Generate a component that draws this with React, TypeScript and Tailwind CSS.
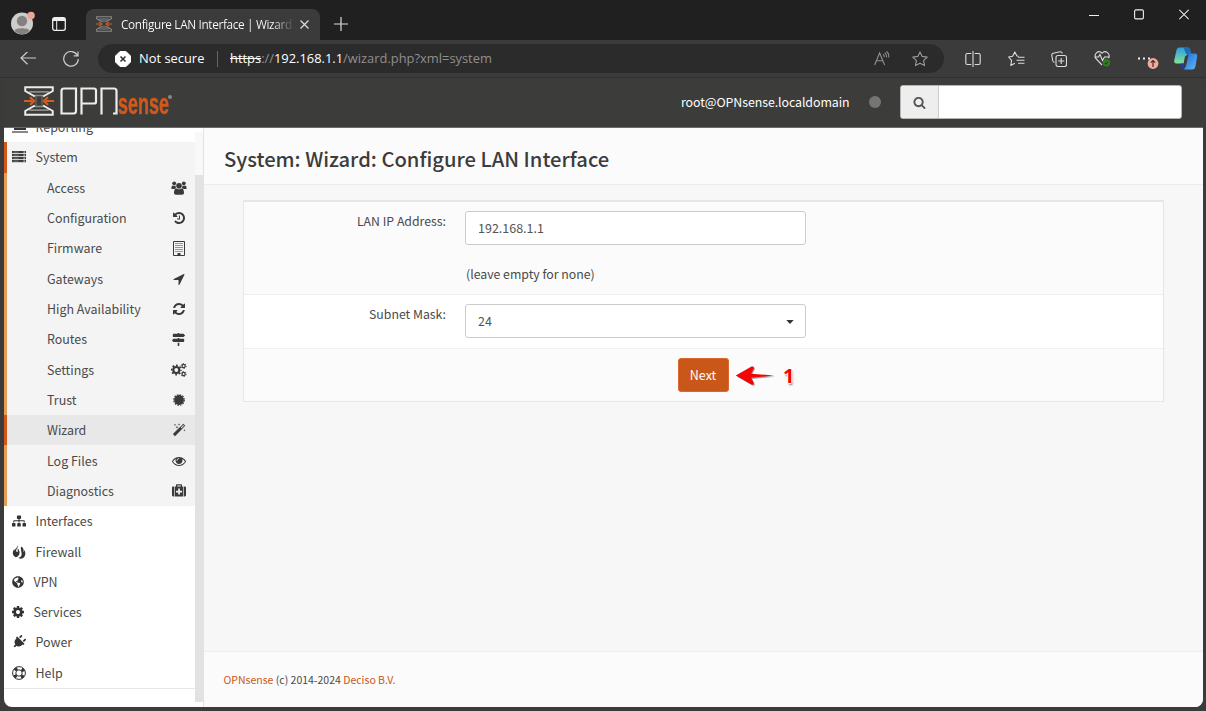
import type { ReactNode } from "react";
import { FaSitemap, FaMapSigns, FaPlug, FaGlobeAmericas } from "react-icons/fa";

const PATHS = {
  search:
    "M1216 832q0-185-131.5-316.5t-316.5-131.5-316.5 131.5-131.5 316.5 131.5 316.5 316.5 131.5 316.5-131.5 131.5-316.5zm512 832q0 52-38 90t-90 38q-54 0-90-38l-343-342q-179 124-399 124-143 0-273.5-55.5t-225-150-150-225-55.5-273.5 55.5-273.5 150-225 225-150 273.5-55.5 273.5 55.5 225 150 150 225 55.5 273.5q0 220-124 399l343 343q37 37 37 90z",
  cog: "M1152 896q0-106-75-181t-181-75-181 75-75 181 75 181 181 75 181-75 75-181zm512-109v222q0 12-8 23t-20 13l-185 28q-19 54-39 91 35 50 107 138 10 12 10 25t-9 23q-27 37-99 108t-94 71q-12 0-26-9l-138-108q-44 23-91 38-16 136-29 186-7 28-36 28h-222q-14 0-24.5-8.5t-11.5-21.5l-28-184q-49-16-90-37l-141 107q-10 9-25 9-14 0-25-11-126-114-165-168-7-10-7-23 0-12 8-23 15-21 51-66.5t54-70.5q-27-50-41-99l-183-27q-13-2-21-12.5t-8-23.5v-222q0-12 8-23t19-13l186-28q14-46 39-92-40-57-107-138-10-12-10-24 0-10 9-23 26-36 98.5-107.5t94.5-71.5q13 0 26 10l138 107q44-23 91-38 16-136 29-186 7-28 36-28h222q14 0 24.5 8.5t11.5 21.5l28 184q49 16 90 37l142-107q9-9 24-9 13 0 25 10 129 119 165 170 7 8 7 22 0 12-8 23-15 21-51 66.5t-54 70.5q26 50 41 98l183 28q13 2 21 12.5t8 23.5z",
  refresh:
    "M1639 1056q0 5-1 7-64 268-268 434.5t-478 166.5q-146 0-282.5-55t-243.5-157l-129 129q-19 19-45 19t-45-19-19-45v-448q0-26 19-45t45-19h448q26 0 45 19t19 45-19 45l-137 137q71 66 161 102t187 36q134 0 250-65t186-179q11-17 53-117 8-23 30-23h192q13 0 22.5 9.5t9.5 22.5zm25-800v448q0 26-19 45t-45 19h-448q-26 0-45-19t-19-45 19-45l138-138q-148-137-349-137-134 0-250 65t-186 179q-11 17-53 117-8 23-30 23h-199q-13 0-22.5-9.5t-9.5-22.5v-7q65-268 270-434.5t480-166.5q146 0 284 55.5t245 156.5l130-129q19-19 45-19t45 19 19 45z",
  history:
    "M1664 896q0 156-61 298t-164 245-245 164-298 61q-172 0-327-72.5t-264-204.5q-7-10-6.5-22.5t8.500-20.5l137-138q10-9 25-9 16 2 23 12 73 95 179 147t225 52q104 0 198.5-40.5t163.5-109.5 109.500-163.500 40.500-198.500-40.500-198.500-109.500-163.500-163.500-109.500-198.500-40.500q-98 0-188 35.500t-160 101.500l137 138q31 30 14 69-17 40-59 40h-448q-26 0-45-19t-19-45v-448q0-42 40-59 39-17 69 14l130 129q107-101 244.5-156.500t284.500-55.500q156 0 298 61t245 164 164 245 61 298zm-640-288v448q0 14-9 23t-23 9h-320q-14 0-23-9t-9-23v-64q0-14 9-23t23-9h224v-352q0-14 9-23t23-9h64q14 0 23 9t9 23z",
  arrow:
    "M1593 349l-640 1280q-17 35-57 35-5 0-15-2-22-5-35.5-22.5t-13.5-39.5v-576h-576q-22 0-39.5-13.5t-22.5-35.5 4-42 29-30l1280-640q13-7 29-7 27 0 45 19 15 14 18.500 34.500t-6.500 39.500z",
  eye: "M1664 960q-152-236-381-353 61 104 61 225 0 185-131.5 316.5t-316.5 131.5-316.5-131.5-131.5-316.5q0-121 61-225-229 117-381 353 133 205 333.5 326.5t434.5 121.5 434.5-121.5 333.5-326.5zm-720-384q0-20-14-34t-34-14q-125 0-214.5 89.5t-89.5 214.5q0 20 14 34t34 14 34-14 14-34q0-86 61-147t147-61q20 0 34-14t14-34zm848 384q0 34-20 69-140 230-376.5 368.5t-499.5 138.5-499.5-139-376.5-368q-20-35-20-69t20-69q140-229 376.5-368t499.5-139 499.5 139 376.5 368q20 35 20 69z",
};

function Glyph({ d, size = 14 }: { d: string; size?: number }) {
  return (
    <svg width={size} height={size} viewBox="0 0 1792 1792" fill="currentColor">
      <path d={d} />
    </svg>
  );
}

function Users() {
  return (
    <svg width="16" height="14" viewBox="0 0 16 14" fill="currentColor">
      <circle cx="3.2" cy="2.3" r="1.9" />
      <circle cx="12.8" cy="2.3" r="1.9" />
      <path d="M.4 7.400c0-2 .6-3 1.500-3 .5.5 2 .6 2.700.1-.1 1.300.2 2 .8 2.700-1 0-1.600.3-2.100.9H1.500C.8 8.100.4 7.900.4 7.400zM15.600 7.400c0-2-.6-3-1.500-3-.5.5-2 .6-2.700.1.1 1.300-.2 2-.8 2.700 1 0 1.600.3 2.100.9h1.800c.7 0 1.100-.2 1.100-.7z" />
      <circle cx="8" cy="4.700" r="2.800" />
      <path d="M3 11.700c0-2.700.9-4.200 2.400-4.200.8.900 4.400.9 5.200 0 1.500 0 2.400 1.500 2.400 4.200 0 1.300-.7 2-2 2H5c-1.300 0-2-.7-2-2z" />
    </svg>
  );
}

function Gears() {
  return (
    <svg width="16" height="14" viewBox="0 0 16 14" fill="none" stroke="currentColor">
      <circle cx="5.300" cy="7" r="3" strokeWidth="2.200" />
      <circle cx="5.300" cy="7" r="4.700" strokeWidth="1.500" strokeDasharray="1.850 1.840" strokeDashoffset=".9" />
      <circle cx="12.600" cy="3" r="1.600" strokeWidth="1.200" />
      <circle cx="12.600" cy="3" r="2.600" strokeWidth=".9" strokeDasharray="1.200 1.520" />
      <circle cx="12.600" cy="11" r="1.600" strokeWidth="1.200" />
      <circle cx="12.600" cy="11" r="2.600" strokeWidth=".9" strokeDasharray="1.200 1.520" />
    </svg>
  );
}

function Seal() {
  return (
    <svg width="12" height="12" viewBox="0 0 12 12" fill="currentColor">
      <circle cx="6" cy="6" r="4.900" />
      <circle cx="6" cy="6" r="5.300" fill="none" stroke="currentColor" strokeWidth="1.200" strokeDasharray="1.550 1.225" />
    </svg>
  );
}

function Building() {
  return (
    <svg width="12" height="15" viewBox="0 0 12 15" fill="none" stroke="currentColor">
      <path d="M.5.5h11v14H.5z" strokeWidth="1" />
      <path d="M2.500 2.500h7M2.500 4.500h7M2.500 6.500h7M2.500 8.500h7M2.500 10.500h7" strokeDasharray="1 1" strokeWidth="1" />
      <path d="M4.500 13h3" strokeWidth="2" />
    </svg>
  );
}

function Wand() {
  return (
    <svg width="14" height="14" viewBox="0 0 14 14" fill="currentColor">
      <path d="M11.300.8 13.200 2.700 3 13.200 .9 11.100zM11.200 2 8.800 4.400l.8.8L12 2.800z" fillRule="evenodd" />
      <path d="m3 .7.300.9.900.3-.9.300-.3.9-.3-.9-.9-.3.900-.3zM7 .2l.3.900.9.300-.9.300-.3.9-.3-.9-.9-.3.900-.3zM5 2.700l.4 1.100 1.100.4-1.100.4L5 5.700l-.4-1.100-1.100-.4 1.100-.4zM12.500 6l.3.900.9.300-.9.300-.3.900-.3-.9-.9-.3.900-.3z" />
    </svg>
  );
}

function Medkit() {
  return (
    <svg width="14" height="13" viewBox="0 0 14 13" fill="currentColor">
      <path d="M4 2.500V1.200C4 .5 4.400.2 5 .2h4c.6 0 1 .3 1 1v1.300h1.200v10H2.800v-10zm1.200 0h3.600v-1.100H5.200zM6.200 4.500V6.700H4v1.700h2.200v2.200h1.700V8.400h2.200V6.700H7.900V4.500z" fillRule="evenodd" />
      <path d="M0 3.900C0 3 .5 2.500 1.300 2.500h.9v10h-.9C.5 12.500 0 12 0 11.100zM14 3.900c0-.9-.5-1.400-1.300-1.400h-.9v10h.9c.8 0 1.300-.5 1.300-1.400z" />
    </svg>
  );
}

function Server() {
  return (
    <svg width="14" height="12" viewBox="0 0 14 12">
      {[0, 3, 6, 9].map((y) => (
        <g key={y}>
          <rect x="0" y={y} width="14" height="2.200" fill="#3c3c3b" />
          <path d={`M1.500 ${y + 1.1}h5`} stroke="#a5a5a5" strokeWidth=".6" />
          <rect x="11.500" y={y + 0.5} width="1.300" height="1.200" fill="#eee" />
        </g>
      ))}
    </svg>
  );
}

function Flames() {
  return (
    <svg width="14" height="14" viewBox="0 0 14 14" fill="currentColor">
      <path d="M6 0C6.700 2.300 4.200 3.400 4.200 5.700c0 1.200.9 1.700 1.400 1.100.6-.8-.2-2.200 0-3.500 1.900 1.900 2.600 4.300 1.500 6.500-.8 1.600-2 2.300-3.400 2.400C1.600 11.400.6 9.500.8 7.600.9 6 1.800 5 2.200 3.800c.3 1 .2 1.800.3 2.600C2.600 3.800 5.500 2.800 6 0z" />
      <path d="M9 1.500c2.500 1.300 3.200 3.400 2.300 5.600.7-.4 1-1.100 1-2 1.200 2 1.500 4.500.2 6.400-1 1.600-2.600 2.300-4.200 2.200-.9-.1-1.600-.4-2.100-.9 1.300-.1 2.600-.9 3.200-2.300C10.500 7.700 8.200 5.500 9 1.500z" />
    </svg>
  );
}

function LifeRing() {
  return (
    <svg width="14" height="14" viewBox="0 0 14 14" fill="none" stroke="currentColor">
      <circle cx="7" cy="7" r="6.400" strokeWidth="1" />
      <circle cx="7" cy="7" r="3.200" strokeWidth="1" />
      <circle cx="7" cy="7" r="4.800" strokeWidth="3" strokeDasharray="3 4.540" strokeDashoffset="-2.270" />
    </svg>
  );
}

function Gate({ width, height, line = "#ececec" }: { width: number; height: number; line?: string }) {
  return (
    <svg width={width} height={height} viewBox="0 0 29 30" fill="none" preserveAspectRatio="none">
      <path d="M5 5.800h19M9 9.500h11M9 20.500h11M5 24.200h19" stroke="#8b8b8a" strokeWidth="1.700" />
      <path d="M11.600 10v10M17.400 10v10" stroke="#6f6f6e" strokeWidth="1" />
      <path d="M10.500 10.500 1.200 5V1.200h26.600V5l-9.300 5.500M10.500 19.500 1.200 25v3.800h26.600V25l-9.300-5.500" stroke={line} strokeWidth="1.900" />
      <path d="M0 15h8M29 15h-8" stroke="#d35e1d" strokeWidth="2.200" />
      <path d="m5.800 11.300 4 3.700-4 3.700M23.200 11.300l-4 3.700 4 3.700" stroke="#d35e1d" strokeWidth="2.200" />
    </svg>
  );
}

function Brand() {
  return (
    <div className="flex items-start">
      <Gate width={30} height={30} />
      <svg className="ml-[6px] mt-[1px]" width="59" height="28" viewBox="0 0 59 28" fill="none" stroke="#ececec" strokeWidth="2.200">
        <path d="M1.500 4q0-2.500 2.500-2.500H16V24q0 2.500-2.500 2.500h-12zM21.500 27.500v-26H34q2 0 2 2V15q0 1.500-2 1.500H21.500M41.500 27.500v-26H54q2.500 0 2.500 2.500v22.500h-3.500" />
      </svg>
      <span className="-ml-px mt-[3px] block h-[30px] w-[51px] origin-left scale-x-[0.610] whitespace-nowrap font-['Liberation_Sans',sans-serif] text-[29.500px] font-bold leading-[30px] text-[#d0591d] [-webkit-text-stroke:0.500px_#d0591d]">
        sense
      </span>
      <span className="-ml-px mt-[9px] h-[4px] w-[4px] rounded-full bg-[#888]" />
    </div>
  );
}

function SubItem({ label, icon, active = false }: { label: string; icon: ReactNode; active?: boolean }) {
  return (
    <div
      className={
        active
          ? "flex h-[30.320px] items-center border-l-[3px] border-[#d35818] bg-[#e8e8e8] pl-[40px] pr-[8px]"
          : "flex h-[30.320px] items-center border-l-[3px] border-[#e59d56] bg-[#f4f4f4] pl-[40px] pr-[8px]"
      }
    >
      <span className="grow">{label}</span>
      <span className="flex w-[17px] justify-center text-[#3a3a3a]">{icon}</span>
    </div>
  );
}

function TopItem({ label, icon, narrow = false }: { label: string; icon: ReactNode; narrow?: boolean }) {
  return (
    <div className="flex h-[30.320px] items-center pl-[8px]">
      <span className={narrow ? "-ml-px flex w-[22.500px] text-[#333]" : "flex w-[23.500px] text-[#333]"}>{icon}</span>
      {label}
    </div>
  );
}

function Sidebar() {
  return (
    <aside className="flex w-[200px] shrink-0 border-r border-[#e3e3e3] bg-white text-[12.450px] leading-[18px] text-[#4a4a4a]">
      <div className="w-[191px] overflow-hidden">
        <div className="-mt-[16px]">
          <TopItem
            label="Reporting"
            icon={
              <svg width="16" height="14" viewBox="0 0 16 14">
                <path d="M2 1h12v9H2z" fill="#3b3036" />
                <path d="M0 11h16v2H0z" fill="#888" />
              </svg>
            }
          />
          <div className="flex h-[30.320px] items-center border-l-[3px] border-[#d35818] bg-[#f4f4f4] pl-[5px]">
            <span className="flex w-[23.500px]">
              <Server />
            </span>
            System
          </div>
          <SubItem label="Access" icon={<Users />} />
          <SubItem label="Configuration" icon={<Glyph d={PATHS.history} />} />
          <SubItem label="Firmware" icon={<Building />} />
          <SubItem label="Gateways" icon={<Glyph d={PATHS.arrow} />} />
          <SubItem label="High Availability" icon={<Glyph d={PATHS.refresh} />} />
          <SubItem label="Routes" icon={<FaMapSigns size={13} />} />
          <SubItem label="Settings" icon={<Gears />} />
          <SubItem label="Trust" icon={<Seal />} />
          <SubItem label="Wizard" active icon={<Wand />} />
          <SubItem label="Log Files" icon={<Glyph d={PATHS.eye} />} />
          <SubItem label="Diagnostics" icon={<Medkit />} />
          <TopItem label="Interfaces" icon={<FaSitemap size={14} />} />
          <TopItem label="Firewall" icon={<Flames />} />
          <TopItem label="VPN" narrow icon={<FaGlobeAmericas size={12} className="ml-px" />} />
          <TopItem label="Services" narrow icon={<Glyph d={PATHS.cog} />} />
          <TopItem label="Power" icon={<FaPlug size={14} className="rotate-45" />} />
          <TopItem label="Help" icon={<LifeRing />} />
          <div className="h-px bg-[#e7e7e7]" />
        </div>
      </div>
      <div className="w-[8px] pt-[4px]">
        <div className="h-[43px] bg-[#f8f8f8]" />
        <div className="h-[527px] bg-[#e2e2e2]" />
      </div>
    </aside>
  );
}

function TitleBar() {
  return (
    <div className="flex h-[40px] shrink-0 items-end bg-[#202020] text-[#e8e8e8]">
      <div className="flex h-[34px] w-[86px] items-center pl-[11px]">
        <svg width="24" height="24" viewBox="0 0 24 24">
          <circle cx="11" cy="12.500" r="11" fill="#cfcdcb" />
          <circle cx="11" cy="10" r="5.200" fill="#848280" />
          <path d="M3.500 19.500c1-3 14-3 15 0-3.500 5-11.500 5-15 0z" fill="#848280" />
          <circle cx="20" cy="4.500" r="3.800" fill="#eea59b" />
        </svg>
        <svg className="ml-[17px] mt-[2px]" width="14" height="14" viewBox="0 0 14 14" fill="none" stroke="#eee">
          <rect x=".7" y=".7" width="12.600" height="12.600" rx="2" strokeWidth="1.300" />
          <path d="M1 2.500h12" strokeWidth="3" />
          <path d="M4.700 4v9" />
        </svg>
      </div>
      <div className="flex h-[31px] w-[234px] items-center rounded-t-[8px] bg-[#3b3b3b] pb-[2px] pl-[10px]">
        <Gate width={16} height={16} line="#8b8b8b" />
        <span className="ml-[9px] w-[172px] whitespace-nowrap bg-gradient-to-r from-[#fff] from-88% to-[#4a4a4a] bg-clip-text font-['Open_Sans',sans-serif] text-[11.800px] leading-[18px] tracking-[-0.350px] text-transparent">
          Configure LAN Interface | Wizard
        </span>
        <svg className="ml-[7px] mt-[2px]" width="9" height="9" viewBox="0 0 9 9" stroke="#ddd" strokeWidth="1.200">
          <path d="m.5.5 8 8m0-8-8 8" />
        </svg>
      </div>
      <svg className="mb-[9px] ml-[14px]" width="14" height="14" viewBox="0 0 14 14" stroke="#ddd" strokeWidth="1.200">
        <path d="M7 0v14M0 7h14" />
      </svg>
      <div className="ml-auto mr-[17px] flex items-center gap-[35px] pb-[20px]">
        <svg width="10" height="11" viewBox="0 0 10 11" stroke="#eee">
          <path d="M0 6.500h10" />
        </svg>
        <svg width="10" height="11" viewBox="0 0 10 11" fill="none" stroke="#eee" strokeWidth="1.100">
          <rect x=".6" y=".9" width="8.800" height="9" rx="1.300" />
        </svg>
        <svg width="10" height="11" viewBox="0 0 10 11" stroke="#eee" strokeWidth="1.100">
          <path d="m.3.8 9.400 9.400m0-9.400L.3 10.200" />
        </svg>
      </div>
    </div>
  );
}

const STAR = "m8 .9 2.200 4.500 5 .7-3.600 3.500.9 5L8 12.200l-4.500 2.400.9-5L.8 6.100l5-.7z";

function Toolbar() {
  return (
    <div className="flex h-[38px] shrink-0 items-center border-b border-[#303030] bg-[#3b3b3b] pl-[20px] pr-[8px] font-['Open_Sans',sans-serif]">
      <svg width="16" height="14" viewBox="0 0 16 14" fill="none" stroke="#ccc" strokeWidth="1.200">
        <path d="M16 6H1M7.500-.3 1 6l6.500 6.300" />
      </svg>
      <svg className="ml-[27px]" width="16" height="16" viewBox="0 0 16 16" fill="none" stroke="#ccc" strokeWidth="1.200">
        <path d="M14.500 4.500A7.300 7.300 0 1 0 15.300 8M15 .5v4.300h-4.300" />
      </svg>
      <div className="ml-[19px] flex h-[29px] w-[846px] items-center rounded-full bg-[#2b2b2b] pl-[17px] pr-[16px]">
        <svg width="16" height="16" viewBox="0 0 16 16">
          <path d="M5 .5h6L15.500 5v6L11 15.500H5L.5 11V5z" fill="#fff" stroke="#fff" strokeLinejoin="round" />
          <path d="m5.500 5.500 5 5m0-5-5 5" stroke="#2b2b2b" strokeWidth="1.500" />
        </svg>
        <span className="ml-[8px] mt-px w-[66px] whitespace-nowrap text-[12.900px] text-white">Not secure</span>
        <span className="ml-[12px] h-[16px] w-px bg-[#666]" />
        <span className="ml-[12px] mt-px whitespace-nowrap text-[12.900px] text-[#8f8f8f]">
          <span className="text-white line-through">https</span>://<span className="text-white">192.168.1.1</span>/wizard.php?xml=system
        </span>
        <svg className="ml-auto" width="16" height="15" viewBox="0 0 16 15" fill="none" stroke="#8f8f8f" strokeWidth="1.100">
          <path d="m.6 14 5-12 5 12M2.500 9.800h6.200M9 3.200q1.500 1 1.300 3M10.800 1.800q2.200 1.600 1.800 4.500M12.500.5q2.800 2 2.200 6" />
        </svg>
        <svg className="ml-[22px]" width="16" height="16" viewBox="0 0 16 16" fill="none" stroke="#999" strokeWidth="1.100">
          <path d={STAR} strokeLinejoin="round" />
        </svg>
      </div>
      <div className="ml-auto flex items-center text-[#ddd]">
        <svg width="16" height="16" viewBox="0 0 16 16" fill="none" stroke="currentColor" strokeWidth="1.100">
          <path d="M6.300 2.500h-4q-1.500 0-1.500 1.500v8q0 1.500 1.500 1.500h4M9.700 2.500h4q1.500 0 1.500 1.500v8q0 1.500-1.500 1.500h-4M8 0v16" />
        </svg>
        <svg className="ml-[27px]" width="17" height="16" viewBox="0 0 17 16" fill="none" stroke="currentColor" strokeWidth="1.100">
          <path d="M10.500 5.300 9 5 6.800.9 4.600 5.300l-4 .7 3 3.300-.8 5.200 4-2.200M10 6.200h6.500M8.500 9.200h8M10 12.200h6.500" strokeLinejoin="round" />
        </svg>
        <svg className="ml-[26px]" width="16" height="16" viewBox="0 0 16 16" fill="none" stroke="currentColor" strokeWidth="1.100">
          <rect x="5" y="4.500" width="10.500" height="11" rx="2" />
          <path d="M10.200 7v6M7.200 10h6M3.500 11.500Q2 11 1.700 9.500L.8 4.500Q.5 2.800 2.200 2.300L9 .8q1.800-.3 2.300 1.700" />
        </svg>
        <svg className="ml-[27px]" width="17" height="17" viewBox="0 0 17 17" fill="none" stroke="currentColor" strokeWidth="1.100">
          <path d="M8 15 1.800 8.500C-.6 4 4.500-.7 8 3.200c3.500-3.900 8.800.8 6.600 5M.5 7h4L6 4.500l2.500 6L10.500 7h5" />
          <circle cx="12.500" cy="12.800" r="3.700" fill="#2f7d20" stroke="none" />
          <path d="m11 13 1 1 2-2.300" stroke="#174d10" />
        </svg>
        <svg className="ml-[26px] mt-[2px]" width="22" height="18" viewBox="0 0 22 18">
          <path d="M1 6.500h2v2H1zM6 6.500h2v2H6zM11 6.500h2v2h-2z" fill="#eee" />
          <circle cx="16" cy="12.500" r="5.400" fill="#f0aaa2" />
          <path d="M16 16V9.500m-2.200 2.200L16 9.500l2.200 2.200" fill="none" stroke="#4b2b29" strokeWidth="1.200" />
        </svg>
        <svg className="ml-[14px]" width="25" height="23" viewBox="0 0 25 23">
          <defs>
            <linearGradient id="cpl" x1="0" y1="0" x2="0" y2="1">
              <stop offset="0" stopColor="#2e9be0" />
              <stop offset="1" stopColor="#83e29a" />
            </linearGradient>
            <linearGradient id="cpr" x1="0" y1="0" x2="1" y2="1">
              <stop offset="0" stopColor="#2a63d8" />
              <stop offset="1" stopColor="#59bdf5" />
            </linearGradient>
          </defs>
          <path d="M6 .5h8.500q2 0 2.500 2l1.500 5h-4l-2.500 2-1.500 7H3.500Q.8 16.500 1.200 13.500L3.500 3Q4.200.5 6 .5z" fill="url(#cpl)" />
          <path d="M10.500.5h4q2 0 2.500 2l1.500 5h-4q-1.600 0-2-2z" fill="#1d6cb5" />
          <path d="M17 6.500h5q2.500 0 2.200 3L22.500 19q-.6 3.500-3.500 3.500h-7q-1 0-1.500-.5 2-1 2.500-3l2.200-10q.5-2.500 1.800-2.500z" fill="url(#cpr)" />
          <path d="M7.500 16.500h3l1 5.500q-2 0-3-2z" fill="#1a3fb5" />
        </svg>
      </div>
    </div>
  );
}

function Header() {
  return (
    <header className="flex h-[50px] shrink-0 items-center border-b border-[#6b6b6a] bg-[#3c3c3b] pb-px pl-[20px] pr-[21px]">
      <Brand />
      <span className="ml-auto w-[169px] whitespace-nowrap text-[12.400px] leading-[18px] tracking-[-0.080px] text-[#fff]">
        root@OPNsense.localdomain
      </span>
      <span className="ml-[19px] h-[12px] w-[12px] rounded-full bg-[#757575]" />
      <div className="ml-[19px] flex h-[34px] w-[282px] overflow-hidden rounded-[3px] border border-[#b5b5b5] bg-white">
        <span className="flex w-[38px] items-center justify-center border-r border-[#ccc] bg-[#eee] text-[#555]">
          <Glyph d={PATHS.search} size={13} />
        </span>
      </div>
    </header>
  );
}

function Wizard() {
  return (
    <main className="flex grow flex-col bg-[#f7f7f7] text-[12.300px] leading-[18px] text-[#4a4a4a]">
      <div className="flex h-[57px] items-center border-b border-[#ececec] bg-[#fbfbfb] pb-px pl-[20px] pt-[7px]">
        <h1 className="whitespace-nowrap text-[20.200px] font-medium leading-[28px] text-[#3c3c3b]">
          System: Wizard: Configure LAN Interface
        </h1>
      </div>
      <div className="ml-[39px] mr-[39px] mt-[15px] flex h-[202px] flex-col border border-t-2 border-[#e6e6e6]">
        <div className="flex h-[93px] border-b border-[#efefef] bg-[#fbfbfb]">
          <div className="w-[202px] pt-[10px] text-right">LAN IP Address:</div>
          <div className="ml-[19px] pt-[9px]">
            <div className="flex h-[34px] w-[341px] items-center rounded-[3px] border border-[#ccc] bg-white pl-[12px] text-[12.500px] text-[#555]">
              192.168.1.1
            </div>
            <div className="ml-px mt-[20px]">(leave empty for none)</div>
          </div>
        </div>
        <div className="flex h-[54px] border-b border-[#efefef] bg-white">
          <div className="w-[202px] pt-[10px] text-right">Subnet Mask:</div>
          <div className="ml-[19px] pt-[9px]">
            <div className="flex h-[34px] w-[341px] items-center justify-between rounded-[3px] border border-[#ccc] bg-white pl-[12px] pr-[11px] text-[12.500px] text-[#555]">
              24
              <svg className="mt-px" width="8" height="4" viewBox="0 0 8 4">
                <path d="M.3 0h7.400L4 4z" fill="#333" />
              </svg>
            </div>
          </div>
        </div>
        <div className="flex grow items-start bg-[#fbfbfb] pl-[433.500px] pt-[9px]">
          <button className="h-[34px] w-[51px] rounded-[3px] border border-[#d96a2c] bg-[#ca571a] text-[12.500px] text-white">Next</button>
          <svg className="ml-[6px] mt-[6px]" width="40" height="23" viewBox="0 0 40 23">
            <path d="M2 12.500 18 3.500q3 0 1.500 2.500l-2.500 5 23 1.800-23 2.200 2.500 4.500q1 2.800-2 2z" fill="#555" opacity=".55" />
            <path d="M.8 11.500 16.500 2.500q3.500-.5 2 2.500l-2.300 4.800L39 11.500l-22.800 2.300 2.300 4.400q1 3-2.200 2.300z" fill="#f20505" />
          </svg>
          <span className="ml-[8.500px] mt-[7px] font-['Open_Sans',sans-serif] text-[20px] font-bold leading-[22px] text-[#f20505] [text-shadow:1px_0_#fff,-1px_0_#fff,0_1px_#fff,0_-1px_#fff,1px_2px_2px_#777]">
            1
          </span>
        </div>
      </div>
      <footer className="mt-auto flex h-[56px] items-center border-t border-[#efefef] bg-[#fbfbfb] pl-[19.500px] text-[10.500px]">
        <p className="whitespace-nowrap">
          <span className="text-[#ca571a]">OPNsense</span> (c) 2014-2024 <span className="text-[#ca571a]">Deciso B.V.</span>
        </p>
      </footer>
    </main>
  );
}

export default function App() {
  return (
    <div className="flex h-[711px] w-[1206px] flex-col overflow-hidden bg-[#3b3b3b] font-['Noto_Sans_CJK_SC',sans-serif]">
      <TitleBar />
      <Toolbar />
      <div className="ml-[4px] flex h-[629px] w-[1199px] flex-col overflow-hidden rounded-[8px]">
        <Header />
        <div className="flex grow overflow-hidden">
          <Sidebar />
          <Wizard />
        </div>
      </div>
    </div>
  );
}
